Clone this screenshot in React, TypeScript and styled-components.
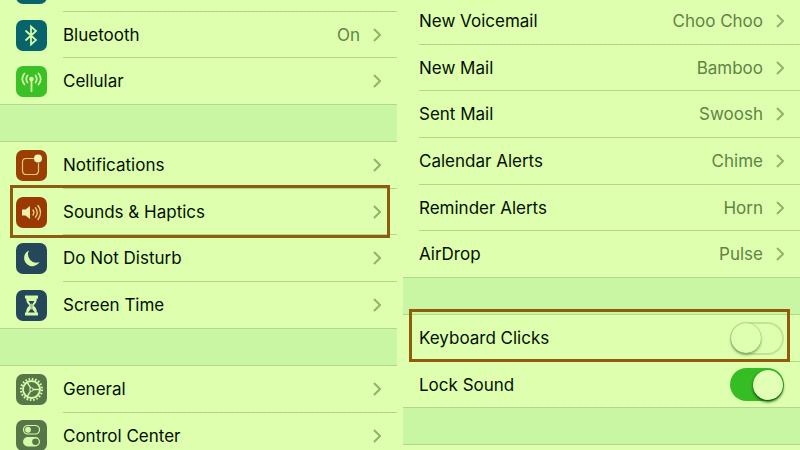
import React from "react";
import styled, { createGlobalStyle, css } from "styled-components";

const color = {
  row: "#deffae",
  band: "#c9f6a3",
  line: "#b4d68c",
  text: "#031002",
  detail: "#608445",
  chevron: "#8fb56c",
  mark: "#8f5b0c",
  glyph: "#d6fba8",
};

const GlobalStyle = createGlobalStyle`
  * { box-sizing: border-box; }
  body {
    margin: 0;
    overflow: hidden;
    background: ${color.row};
    color: ${color.text};
    font-family: Inter, "Liberation Sans", sans-serif;
    font-size: 17px;
    line-height: 24px;
  }
`;

const Page = styled.main`
  display: grid;
  grid-template-columns: 1fr 1fr;
  column-gap: 6px;
  height: 100vh;
  overflow: hidden;
`;

const Panel = styled.section<{ $scrolled: number }>`
  display: flex;
  flex-direction: column;
  min-width: 0;
  margin-top: -${(p) => p.$scrolled}px;
`;

const Group = styled.ul`
  flex: none;
  list-style: none;
  margin: 0;
  padding: 0;
  background: ${color.row};
`;

const Band = styled.div`
  flex: none;
  height: 37px;
  background: ${color.band};
  border-bottom: 1px solid ${color.line};
`;

const Row = styled.li<{ $marked?: boolean }>`
  position: relative;
  display: flex;
  height: 47px;
  padding-left: 16px;

  &:nth-child(3n + 2) {
    height: 46px;
  }

  &:last-child {
    border-bottom: 1px solid ${color.line};
  }

  ${(p) =>
    p.$marked &&
    css`
      &::after {
        content: "";
        position: absolute;
        inset: -4px 7px -3px 10px;
        border: 3px solid ${color.mark};
        pointer-events: none;
        z-index: 1;
      }
    `}
`;

const PlainRow = styled(Row)`
  ${(p) =>
    p.$marked &&
    css`
      &::after {
        inset: -6px 10px 0 6px;
      }
    `}
`;

const content = css`
  flex: 1;
  display: flex;
  align-items: center;
  gap: 13px;
  min-width: 0;
  padding-right: 16px;
  color: inherit;
  text-decoration: none;

  ${Row}:not(:last-child) > & {
    border-bottom: 1px solid ${color.line};
  }
`;

const RowLink = styled.a`
  ${content}
`;

const RowLabel = styled.label`
  ${content}
`;

const Title = styled.span`
  flex: 1;
  white-space: nowrap;
`;

const Detail = styled.span`
  color: ${color.detail};
`;

const Chevron = styled.svg`
  flex: none;
  width: 8px;
  height: 14px;
  fill: none;
  stroke: ${color.chevron};
  stroke-width: 2;
`;

const Tile = styled.span<{ $color: string }>`
  flex: none;
  align-self: center;
  display: flex;
  width: 31px;
  height: 31px;
  margin-right: 16px;
  border-radius: 7px;
  background: ${(p) => p.$color};
`;

const Glyph = styled.svg`
  width: 31px;
  height: 31px;
  fill: none;
  stroke: ${color.glyph};
  stroke-linecap: round;
  stroke-linejoin: round;
`;

const Switch = styled.input`
  appearance: none;
  flex: none;
  display: flex;
  align-items: center;
  width: 54px;
  height: 33px;
  margin: 0;
  padding: 0 1px;
  border-radius: 17px;
  box-shadow: inset 0 0 0 2px #c0e497;

  &::before {
    content: "";
    width: 30px;
    height: 30px;
    border-radius: 50%;
    background: #deffb0;
    box-shadow: 0 2px 3px #4f823b99, 0 0 1px #62964a;
  }

  &:checked {
    justify-content: flex-end;
    background: #35bd23;
    box-shadow: none;
  }

  &:checked::before {
    background: #e1ffb5;
    box-shadow: 0 2px 3px #12550e, 0 0 1px #176915;
  }
`;

const solid = { fill: color.glyph, stroke: "none" };

const glyphs: Record<string, React.ReactNode> = {
  wifi: <path d="M7 13q8.500-7 17 0M10 17q5.500-4 11 0" strokeWidth="2" />,
  bluetooth: (
    <path
      d="M10 11l10 9-5 4.500V6.500l5 4.500L10 20"
      strokeWidth="1.800"
      strokeLinejoin="miter"
    />
  ),
  cellular: (
    <>
      <circle cx="15.500" cy="13" r="2.300" {...solid} />
      <path d="M15.500 14v11" strokeWidth="1.800" />
      <path
        d="M11.500 9.500q-2.500 3.500 0 7M8.500 7.500q-4.500 5.500 0 11M19.500 9.500q2.500 3.500 0 7M22.500 7.500q4.500 5.500 0 11"
        strokeWidth="1.700"
      />
    </>
  ),
  notifications: (
    <>
      <path
        d="M17.500 8.500H10A3.500 3.500 0 0 0 6.500 12v9A3.500 3.500 0 0 0 10 24.500h9a3.500 3.500 0 0 0 3.500-3.500v-7.500"
        strokeWidth="1.200"
        stroke="#e8c77d"
      />
      <circle cx="22" cy="8.500" r="4" fill="#f3f5b4" stroke="none" />
    </>
  ),
  sounds: (
    <>
      <path d="M6 12.500h3.500L14 9v13l-4.500-3.500H6z" fill="#eff0ae" stroke="none" />
      <path
        d="M17 13q1.800 2.500 0 5M19.500 10.800q3.400 4.700 0 9.400M22 8.500q5 7 0 14"
        strokeWidth="1.400"
        stroke="#e6ce85"
      />
    </>
  ),
  moon: (
    <path d="M13 7.500A8.200 8.200 0 1 0 23.500 19A8.300 8.300 0 0 1 13 7.500z" {...solid} />
  ),
  hourglass: (
    <>
      <path
        d="M9 5.500h13v3h-1.200c0 3.500-1 5-3.300 7 2.300 2 3.300 3.500 3.300 7H22v3H9v-3h1.200c0-3.500 1-5 3.300-7-2.300-2-3.300-3.500-3.300-7H9z"
        {...solid}
      />
      <path
        d="M12.500 11h6l-2.300 3.500v4.500l2.800 3.500h-7l2.800-3.500v-4.500z"
        fill="#24485a"
        stroke="none"
      />
      <path d="M15.500 14v5" strokeWidth=".7" />
    </>
  ),
  gear: (
    <>
      <circle cx="15.500" cy="15.500" r="10.500" strokeWidth="2.200" strokeLinecap="butt" strokeDasharray="1.600 1.699" />
      <circle cx="15.500" cy="15.500" r="8.500" strokeWidth="1.800" />
      <path d="M15.500 15.500H24M15.500 15.500L11.200 8.300M15.500 15.500L11.200 22.700" strokeWidth="1.400" />
      <circle cx="15.500" cy="15.500" r="1.800" fill="#587749" strokeWidth="1" />
    </>
  ),
  controls: (
    <>
      <rect x="7.500" y="5.500" width="16" height="8.500" rx="4.250" strokeWidth="1.200" />
      <circle cx="12" cy="9.750" r="2.900" {...solid} />
      <rect x="7" y="17" width="17" height="9.500" rx="4.750" {...solid} />
      <circle cx="19.500" cy="21.750" r="3.300" fill="#587749" stroke="none" />
    </>
  ),
};

type Item = {
  id: string;
  title?: string;
  icon?: string;
  tile?: string;
  detail?: string;
  marked?: boolean;
};

const connections: Item[] = [
  { id: "wifi", icon: "wifi", tile: "#06646a" },
  { id: "bluetooth", title: "Bluetooth", icon: "bluetooth", tile: "#06646a", detail: "On" },
  { id: "cellular", title: "Cellular", icon: "cellular", tile: "#3bc126" },
];

const alerts: Item[] = [
  { id: "notifications", title: "Notifications", icon: "notifications", tile: "#9a3e04" },
  { id: "sounds", title: "Sounds & Haptics", icon: "sounds", tile: "#9a3a02", marked: true },
  { id: "dnd", title: "Do Not Disturb", icon: "moon", tile: "#24485a" },
  { id: "screen-time", title: "Screen Time", icon: "hourglass", tile: "#24485a" },
];

const system: Item[] = [
  { id: "general", title: "General", icon: "gear", tile: "#587749" },
  { id: "control-center", title: "Control Center", icon: "controls", tile: "#587749" },
];

const sounds: Item[] = [
  { id: "voicemail", title: "New Voicemail", detail: "Choo Choo" },
  { id: "new-mail", title: "New Mail", detail: "Bamboo" },
  { id: "sent-mail", title: "Sent Mail", detail: "Swoosh" },
  { id: "calendar", title: "Calendar Alerts", detail: "Chime" },
  { id: "reminder", title: "Reminder Alerts", detail: "Horn" },
  { id: "airdrop", title: "AirDrop", detail: "Pulse" },
];

function LinkGroup({ items }: { items: Item[] }) {
  return (
    <Group>
      {items.map((item) => (
        <Row key={item.id} $marked={item.marked}>
          {item.icon && item.tile && (
            <Tile $color={item.tile}>
              <Glyph viewBox="0 0 31 31" aria-hidden="true">
                {glyphs[item.icon]}
              </Glyph>
            </Tile>
          )}
          <RowLink href={`#${item.id}`}>
            <Title>{item.title}</Title>
            {item.detail && <Detail>{item.detail}</Detail>}
            <Chevron viewBox="0 0 8 14" aria-hidden="true">
              <path d="M1 1l6 6-6 6" />
            </Chevron>
          </RowLink>
        </Row>
      ))}
    </Group>
  );
}

export default function App() {
  return (
    <>
      <GlobalStyle />
      <Page>
        <Panel $scrolled={35}>
          <LinkGroup items={connections} />
          <Band />
          <LinkGroup items={alerts} />
          <Band />
          <LinkGroup items={system} />
        </Panel>
        <Panel $scrolled={2}>
          <LinkGroup items={sounds} />
          <Band />
          <Group>
            <PlainRow $marked>
              <RowLabel>
                <Title>Keyboard Clicks</Title>
                <Switch type="checkbox" role="switch" />
              </RowLabel>
            </PlainRow>
            <PlainRow>
              <RowLabel>
                <Title>Lock Sound</Title>
                <Switch type="checkbox" role="switch" defaultChecked />
              </RowLabel>
            </PlainRow>
          </Group>
          <Band />
        </Panel>
      </Page>
    </>
  );
}
